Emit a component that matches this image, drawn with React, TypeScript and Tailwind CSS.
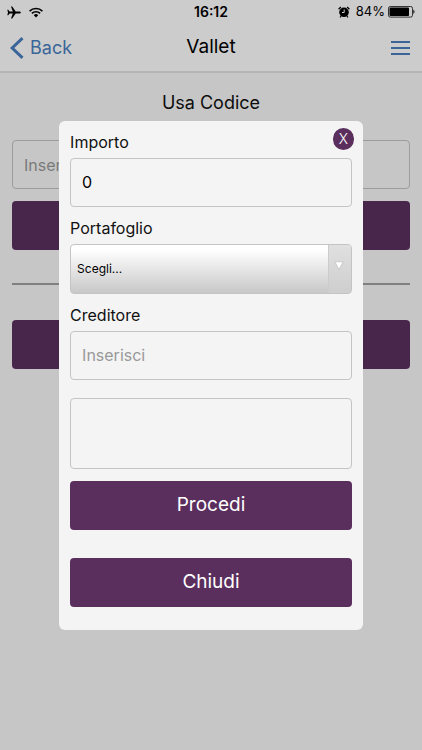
import { useState } from "react";

const inputClass =
  "block h-[49px] w-full rounded border border-[#c4c4c4] bg-transparent px-[11px] text-base text-black placeholder:text-[#999999] outline-none";
const buttonClass =
  "block h-[49px] w-full rounded bg-[#5a2f5e] pt-px text-[19px] text-white";
const labelClass = "block h-[25px] text-base leading-[27px] text-[#111111]";

function StatusBar() {
  return (
    <div className="grid h-6 grid-cols-3 items-center px-[7px] text-black">
      <div className="flex items-center gap-2">
        <svg width="14" height="13" viewBox="0 0 14 13" fill="currentColor">
          <path d="M13.8 6.5c0-.6-.7-1-1.6-1H8.7L5.2.4H4l1.8 5.1H2.6L1.2 3.7H.3l.7 2.8-.7 2.8h.9l1.4-1.8h3.2L4 12.6h1.2l3.5-5.1h3.5c.9 0 1.6-.4 1.6-1z" />
        </svg>
        <svg width="14" height="11" viewBox="0 0 14 11" fill="none" stroke="currentColor" strokeWidth="1.6">
          <path d="M.6 4.1a9 9 0 0 1 12.8 0" />
          <path d="M2.9 6.4a5.8 5.8 0 0 1 8.2 0" />
          <path d="M7 10.5 4.8 8.2a3.1 3.1 0 0 1 4.4 0z" fill="currentColor" stroke="none" />
        </svg>
      </div>
      <div className="text-center text-sm font-semibold">16:12</div>
      <div className="flex items-center justify-end">
        <svg className="mr-1.5" width="12" height="12" viewBox="0 0 12 12">
          <circle cx="6" cy="6.3" r="4.8" fill="currentColor" />
          <path d="M.6 3.2 2.9 1M11.4 3.2 9.1 1M3 10.2l-.9 1.1M9 10.2l.9 1.1" stroke="currentColor" strokeWidth="1.3" />
          <path d="M6.2 3.5v3H4" fill="none" stroke="#ffffff" strokeWidth="1" />
        </svg>
        <span className="mr-[3px] text-[13px]">84%</span>
        <svg width="27" height="12" viewBox="0 0 27 12">
          <rect x=".5" y=".5" width="24" height="10.6" rx="1.8" fill="none" stroke="currentColor" strokeOpacity=".75" />
          <rect x="1.5" y="1.6" width="19.5" height="8.4" rx=".8" fill="currentColor" />
          <path d="M25.4 3.8c1.4.4 1.4 3.6 0 4z" fill="currentColor" />
        </svg>
      </div>
    </div>
  );
}

function Header() {
  return (
    <header className="border-b-2 border-[#e3e3e3] bg-white">
      <StatusBar />
      <div className="grid h-[47px] grid-cols-3 items-center px-[10px]">
        <a href="#back" className="flex items-center gap-1.5 text-lg text-[#4a7fc0]">
          <svg width="14" height="22" viewBox="0 0 14 22" fill="none" stroke="currentColor" strokeWidth="3">
            <path d="M12.5 1.2 2.2 11l10.3 9.8" />
          </svg>
          Back
        </a>
        <h1 className="text-center text-[19px] text-black">Vallet</h1>
        <button type="button" aria-label="Menu" className="justify-self-end text-[#4a7fc0]">
          <svg width="21" height="14" viewBox="0 0 21 14" fill="none" stroke="currentColor" strokeWidth="1.8">
            <path d="M0 1h19M0 7h19M0 13h19" />
          </svg>
        </button>
      </div>
    </header>
  );
}

function PaymentModal({ onClose }: { onClose: () => void }) {
  const [amount, setAmount] = useState("0");

  return (
    <div className="fixed inset-0 flex items-center justify-center bg-black/20">
      <div role="dialog" aria-label="Pagamento" className="relative w-[72%] rounded-md bg-[#f4f4f4] px-[11px] pb-[23px] pt-2">
        <button
          type="button"
          onClick={onClose}
          className="absolute right-[9px] top-[7px] flex h-[22px] w-[21px] items-center justify-center rounded-full bg-[#5a2f5e] text-sm font-light text-white"
        >
          X
        </button>

        <label htmlFor="importo" className={labelClass}>Importo</label>
        <input id="importo" value={amount} onChange={(e) => setAmount(e.target.value)} className={`${inputClass} mt-1`} />

        <label htmlFor="portafoglio" className={`${labelClass} mt-2`}>Portafoglio</label>
        <div className="relative mt-1">
          <select
            id="portafoglio"
            className="block h-[50px] w-full appearance-none rounded border border-[#c4c4c4] bg-linear-to-b from-white from-10% to-[#c8c8c8] pl-1.5 pr-8 text-xs text-black outline-none"
          >
            <option>Scegli...</option>
          </select>
          <div className="pointer-events-none absolute inset-y-px right-px flex w-[23px] justify-center rounded-r-[3px] border-l border-[#cccccc] bg-linear-to-b from-[#e0e0e0] to-[#cecece] pr-0.5 pt-4">
            <svg width="10" height="9" viewBox="0 0 10 9">
              <path d="M.8.8h8.4L5 8.4z" fill="#ffffff" stroke="#b5b5b5" strokeWidth=".6" />
            </svg>
          </div>
        </div>

        <label htmlFor="creditore" className={`${labelClass} mt-2`}>Creditore</label>
        <input id="creditore" placeholder="Inserisci" className={`${inputClass} mt-1`} />

        <textarea
          aria-label="Note"
          className="mt-[18px] block h-[71px] w-full resize-none rounded border border-[#c4c4c4] bg-transparent px-[11px] py-2 text-base outline-none"
        />

        <button type="button" className={`${buttonClass} mt-3`}>Procedi</button>
        <button type="button" onClick={onClose} className={`${buttonClass} mt-7`}>Chiudi</button>
      </div>
    </div>
  );
}

export default function App() {
  const [open, setOpen] = useState(true);

  return (
    <div className="min-h-screen bg-[#f8f8f8] font-['Inter',sans-serif]">
      <Header />
      <main className="px-3 pt-[15px]">
        <h2 className="text-center text-lg leading-[30px] text-[#111111]">Usa Codice</h2>
        <input aria-label="Codice" placeholder="Inserisci" className={`${inputClass} mt-[22px]`} />
        <button type="button" aria-label="Procedi" onClick={() => setOpen(true)} className={`${buttonClass} mt-3`} />
        <hr className="mt-[33px] border-t-2 border-[#a0a0a0]" />
        <button type="button" aria-label="Scansiona" className={`${buttonClass} mt-[35px]`} />
      </main>
      {open && <PaymentModal onClose={() => setOpen(false)} />}
    </div>
  );
}
